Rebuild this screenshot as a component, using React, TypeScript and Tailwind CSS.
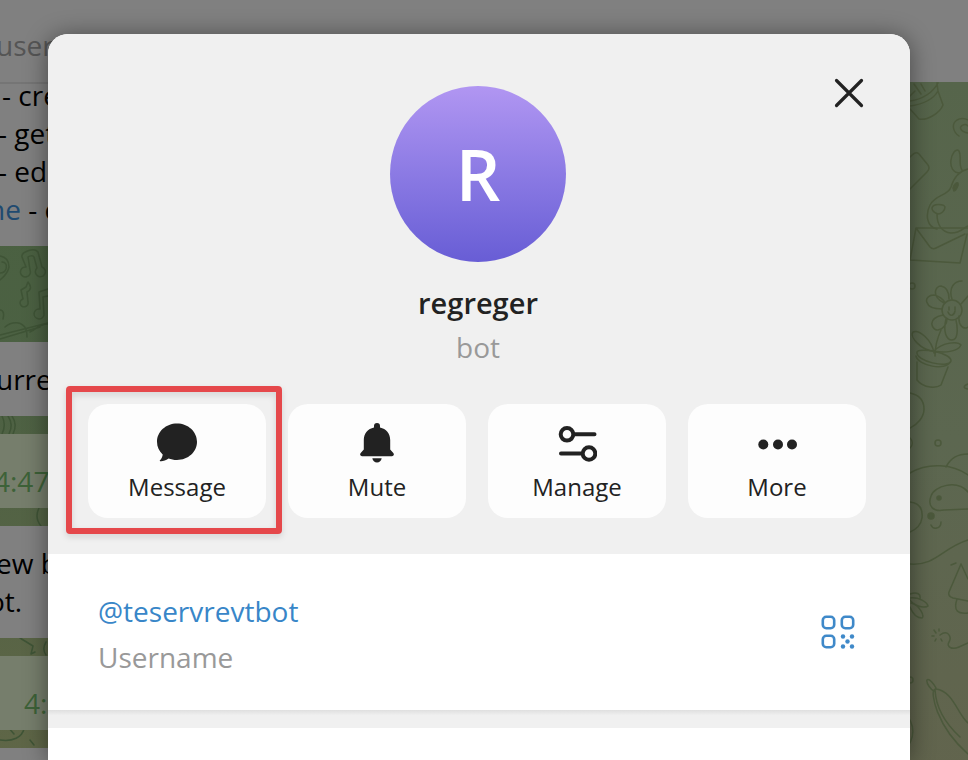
import { ReactNode } from 'react';

const actions = [
  { label: 'Message', icon: <MessageIcon />, highlighted: true },
  { label: 'Mute', icon: <BellIcon /> },
  { label: 'Manage', icon: <ManageIcon /> },
  { label: 'More', icon: <MoreIcon /> },
];

function MessageIcon() {
  return (
    <svg viewBox="0 0 40 40" className="h-10 w-10" fill="currentColor" aria-hidden="true">
      <path d="M20 1.500C31 1.500 40 9.600 40 19.800S31 38 20 38c-3.200 0-6-.6-8.500-1.500C8.500 38.600 5.600 39.600 3 39.200c-.4-.1-.3-.6 0-.9C4.700 36.700 5.500 34.300 5.700 32.400 2.100 29.200 0 24.900 0 19.800 0 9.600 9 1.500 20 1.500Z" />
    </svg>
  );
}

function BellIcon() {
  return (
    <svg viewBox="0 0 40 40" className="h-10 w-10 overflow-visible" fill="currentColor" aria-hidden="true">
      <path d="M17 5.500V4a3 3 0 0 1 6 0v1.500c6.100 1.300 10.200 6.200 10.200 12.500v9.600l3.100 3.500c1.200 1.500.5 3.100-1.300 3.100H5c-1.800 0-2.500-1.600-1.300-3.100l3.100-3.500V18C6.800 11.700 10.900 6.800 17 5.500Z" />
      <path d="M15.300 36.300h9.400c-.4 2.400-2.300 4.200-4.700 4.200s-4.300-1.800-4.700-4.200Z" />
    </svg>
  );
}

function ManageIcon() {
  return (
    <svg viewBox="0 0 40 40" className="h-10 w-10" fill="none" stroke="currentColor" strokeWidth="4" strokeLinecap="round" aria-hidden="true">
      <circle cx="10" cy="12.300" r="6.300" />
      <path d="M17 12.300h20.500M4 31.500h21" />
      <circle cx="32" cy="31.500" r="6.300" />
    </svg>
  );
}

function MoreIcon() {
  return (
    <svg viewBox="0 0 40 40" className="h-10 w-10" fill="currentColor" aria-hidden="true">
      <circle cx="6.300" cy="22.500" r="5" />
      <circle cx="21" cy="22.500" r="5" />
      <circle cx="35" cy="22.500" r="5" />
    </svg>
  );
}

function QrIcon() {
  return (
    <svg viewBox="0 0 34 34" className="h-[34px] w-[34px]" fill="none" stroke="currentColor" strokeWidth="2.600" aria-hidden="true">
      <rect x="1.800" y="1.800" width="11.400" height="11.400" rx="3.500" />
      <rect x="20.800" y="1.800" width="11.400" height="11.400" rx="3.500" />
      <rect x="1.800" y="20.800" width="11.400" height="11.400" rx="3.500" />
      <g fill="currentColor" stroke="none">
        <circle cx="22" cy="21.500" r="2.200" />
        <circle cx="31" cy="21.500" r="2.200" />
        <circle cx="26.500" cy="26.500" r="2.200" />
        <circle cx="22" cy="31.500" r="2.200" />
        <circle cx="31" cy="31.500" r="2.200" />
      </g>
    </svg>
  );
}

// Chat wallpaper doodles, anchored to each side of the window
function Doodles() {
  return (
    <>
      <svg className="absolute left-0 top-0 h-[760px] w-12" viewBox="0 0 48 760" fill="none" stroke="#3f5436" strokeWidth="1.500" strokeLinecap="round" strokeLinejoin="round" aria-hidden="true">
        <path d="M0 256c6 1 9 5 9 11-1 5-4 9-9 13M2 262c4 0 5 3 4 7-1 3-3 4-6 4" />
        <path d="M26 267l-4-10c-1-5 12-10 16-5l4 15a5 5 0 1 1-5 1l-3-11c-1-2-5-1-6 0l2 13a5 5 0 1 1-4-3Z" />
        <path d="M23 299l-2-9 5-3 2-5c3 4 4 7-1 10l1 10a4 4 0 1 1-5-3ZM48 289l-9 3 1 17a5 5 0 1 0 4 6l-1-18 5-1" />
        <path d="M5 327c7-6 17-6 21 2 1 3 1 5 1 8M0 335l48-12M0 339l40-12M30 332c6-2 8-8 18-8M0 310c4 0 4 5 3 9" />
        <path d="M12 416c4 6 4 12 1 18M8 416c4 6 4 12 1 18M2 416c3 6 3 12 0 18" />
        <path d="M39 508c-3 6-3 12 2 18M20 638l13 8-2 8 4-2M46 642c-3 5-3 9 0 13" />
        <path d="M0 740c13 2 22-3 24-11M14 734l-7-8M30 740l4 5" />
      </svg>
      <svg className="absolute right-0 top-0 h-[760px] w-[58px]" viewBox="910 0 58 760" fill="none" stroke="#4c593c" strokeWidth="1.500" strokeLinecap="round" strokeLinejoin="round" aria-hidden="true">
        <path d="M910 101c13-2 23-9 28-18M910 106c15-2 24-8 28-15l5 14c-3 8-16 16-24 14l-9-10M910 96l5-5M914 84l7 10M921 84l4 7M937 83l1 8" />
        <path d="M959 136c-6-4-8-12-2-16 5-3 12-1 14 3M968 133c-7-1-10-6-5-8 2-1 4 0 5 1" />
        <path d="M910 157c3-3 6-6 9-3l9 11c2 3 1 5-1 7l-17 17" />
        <path d="M960 173c-7 0-10-6-9-13 1-7 5-12 8-9 3 5-1 13 3 19M968 169c-8 2-14 8-17 18-3 9-15 7-21 18-5 10-3 22 7 24M932 208c1-5 12-4 13-1 0 4-4 7-7 7-3-1-6-3-6-6ZM937 214c0 11 5 18 14 19 10 0 12-5 17-7" />
        <path d="M953 188c1-4 4-6 5-5 1 2-2 8-4 8Z" fill="#4c593c" />
        <path d="M916 228h52M916 228l14 19c2 2 4 2 6 1l29-14M916 228l-6 32 50 3 7-29" />
        <circle cx="912" cy="286" r="3" />
        <g>
          <circle cx="952" cy="310" r="10" />
          <path d="M944 303c-13-7-9-17-3-17 6 1 8 6 8 13M952 299c-4-12 3-18 10-18M961 304l7-8M942 309c-19 0-19-14-8-14 5 1 9 4 11 8M943 315c-18 4-10 16-5 15 6-1 9-7 9-11M946 319c-3 12 0 21 6 21s6-11 4-20M959 316c-1 10 5 14 9 11M949 307v3M955 307v3M948 312c2 5 6 4 7-1" />
        </g>
        <path d="M941 330c-5 11-6 20-6 26M934 353c-2-13-15-24-21-21-4 5 9 19 21 19 9-9 24-10 27-6-3 7-17 8-27 6" />
        <path d="M917 352c2-5 35 1 34 9-2 8-36 0-34-9ZM916 356c2 10 30 15 34 6M917 362v18c7 9 20 8 24 5l7-18" />
        <path d="M910 393c9 2 14 8 14 16s-6 15-14 19M968 384c-5 2-5 4 0 5" />
        <circle cx="938" cy="443" r="3" />
        <path d="M910 438c3 3 3 7 0 10M910 473c18-11 43-9 58 2M946 467c5-10 12-13 22-13" />
        <path d="M968 492c-11-13-34-6-37 4-4 11 3 16 13 14l24-1M910 502c9 1 13 7 12 16-1 7-5 11-12 14M931 525c2 5 10 4 10-3" />
        <circle cx="939" cy="498" r="2" fill="#4c593c" />
        <circle cx="931" cy="516" r="3" fill="#4c593c" />
        <path d="M910 564c26 2 32-16 58-24M951 565l5-2M961 564l-12 28c-1 3 1 5 4 6l15 3M961 564l7 15M957 599c-4 12 1 15 11 14" />
        <path d="M910 594c6-2 11-1 10 5M910 598c9-1 17 4 18 8-5 3-15-1-18-6M911 603c9 2 14 14 11 15-6 0-10-6-12-11" />
        <path d="M934 630l2 3M939 629v2M932 636h2M935 641l1-2M941 639l1 2M940 635c8-6 12 2 9 7-3 5 3 8 10 5l9-4" />
        <path d="M927 680c2-2 7 4 9 8l-2 3c-3-1-8-8-7-11ZM934 690c-3 2 1 35 34 64M936 689c17 2 22 26 32 34M935 690c1 19 12 35 25 47" />
        <circle cx="910" cy="680" r="3" />
        <path d="M910 720c4 8 4 15 0 23" />
      </svg>
    </>
  );
}

function ChatBlock({ children, className = '' }: { children?: ReactNode; className?: string }) {
  return (
    <div className={`w-1/2 whitespace-nowrap text-[28px] leading-[38px] ${className}`}>{children}</div>
  );
}

function Chat() {
  return (
    <div className="absolute inset-0 flex flex-col overflow-hidden text-black">
      <header className="relative z-10 h-[82px] shrink-0 bg-[#808080] pt-[27px] text-[28px] leading-[36px] text-[#555555]">
        <p className="-ml-1">user</p>
      </header>
      <div className="grow bg-linear-to-b from-[#56654b] via-[#5c6750] to-[#62644d]">
        <div className="absolute inset-y-0 left-0 w-1/2 bg-linear-to-b from-[#48603f] via-[#4c6143] to-[#5f6647]" />
        <Doodles />
        <div className="relative">
          <ChatBlock className="h-[164px] border-t-2 border-[#757575] bg-[#808080]">
            <div className="-mt-2">
              <p className="pl-0.5">- cre</p>
              <p className="-ml-0.5">- get</p>
              <p className="-ml-0.5">- ed</p>
              <p className="-ml-3"><a href="#name" className="text-[#204a70]">ne</a> - c</p>
            </div>
          </ChatBlock>
          <ChatBlock className="mt-24 h-[74px] bg-[#808080] pt-[18px]">
            <p className="-ml-1">urre</p>
          </ChatBlock>
          <ChatBlock className="mt-[18px] h-[74px] bg-[#767e6c] pt-7 text-[#3d6238]">
            <p className="-ml-1.5">4:47</p>
          </ChatBlock>
          <ChatBlock className="mt-[18px] h-28 bg-[#808080] pt-[18px]">
            <p className="-ml-1">ew b</p>
            <p className="-ml-3">ot.</p>
          </ChatBlock>
          <ChatBlock className="mt-[18px] h-[74px] bg-[#767e6c] pt-7 text-[#3d6238]">
            <p className="pl-6">4:</p>
          </ChatBlock>
          <ChatBlock className="mt-[18px] h-12 bg-[#808080]" />
        </div>
      </div>
    </div>
  );
}

export default function App() {
  return (
    <div className="relative flex min-h-screen flex-col overflow-hidden font-['Open_Sans',sans-serif]">
      <Chat />
      <div
        role="dialog"
        aria-label="regreger"
        className="relative z-20 ml-12 mr-[58px] mt-[34px] flex grow flex-col rounded-t-[20px] bg-white text-[#222222] shadow-[0_2px_24px_rgba(0,0,0,0.45)]"
      >
        <section className="relative flex flex-col items-center rounded-t-[20px] bg-[#f0f0f0] pb-9 pl-10 pr-[42px] pt-[52px]">
          <button type="button" aria-label="Close" className="absolute right-[46px] top-11 h-[30px] w-[30px]">
            <svg viewBox="0 0 30 30" fill="none" stroke="currentColor" strokeWidth="3.200" strokeLinecap="round" aria-hidden="true">
              <path d="M2.500 2.500l25 25M27.500 2.500l-25 25" />
            </svg>
          </button>
          <div className="flex h-44 w-44 items-center justify-center rounded-full bg-linear-to-b from-[#b196f2] to-[#685dd5] text-[70px] font-semibold text-white">
            R
          </div>
          <h1 className="mt-[22px] text-[29px] font-semibold leading-[38px]">regreger</h1>
          <p className="mt-1.5 text-[28px] leading-[38px] text-[#999999]">bot</p>
          <div className="mt-[38px] grid w-full grid-cols-4 gap-[22px] pr-0.5">
            {actions.map((action) => (
              <div key={action.label} className="relative">
                <button
                  type="button"
                  className="flex h-[114px] w-full flex-col items-center rounded-[20px] bg-[#fdfdfd] pt-[18px] text-2xl leading-[34px]"
                >
                  {action.icon}
                  <span className="mt-2">{action.label}</span>
                </button>
                {action.highlighted && (
                  <div className="pointer-events-none absolute -bottom-4 -left-[22px] -right-4 -top-[18px] rounded-sm border-[6px] border-[#e5484b] drop-shadow-md" />
                )}
              </div>
            ))}
          </div>
        </section>

        <section className="flex h-[156px] items-center justify-between pl-[50px] pr-[55px] text-[28px]">
          <div className="pt-1">
            <a href="#teservrevtbot" className="block leading-[46px] text-[#3886c8]">@teservrevtbot</a>
            <p className="leading-[46px] text-[#999999]">Username</p>
          </div>
          <button type="button" aria-label="QR code" className="text-[#3f89c9]">
            <QrIcon />
          </button>
        </section>
        <div className="h-[18px] bg-linear-to-b from-[#dfdfdf] to-[#f0f0f0] to-30%" />
      </div>
    </div>
  );
}
